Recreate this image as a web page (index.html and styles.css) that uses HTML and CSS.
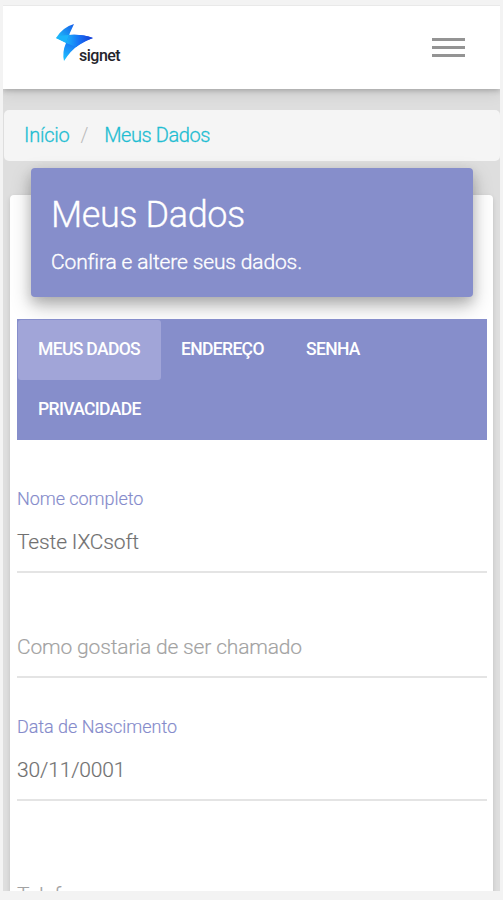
FILE: index.html
```html
<!DOCTYPE html>
<html lang="pt-BR">
<head>
<meta charset="utf-8">
<title>Meus Dados</title>
<link rel="stylesheet" href="styles.css">
</head>
<body>
<div class="screen">
  <header class="header">
    <div class="brand">
      <svg class="mark" width="42" height="38" viewBox="0 0 42 38">
        <defs>
          <linearGradient id="wing" x1="0" y1="0" x2="1" y2="0"><stop offset="0" stop-color="#1cb4fb"/><stop offset=".5" stop-color="#1670f5"/><stop offset="1" stop-color="#1838ce"/></linearGradient>
          <linearGradient id="tail" x1="0" y1="1" x2=".5" y2="0"><stop offset="0" stop-color="#20c8ff"/><stop offset="1" stop-color="#124df0"/></linearGradient>
          <linearGradient id="tip" x1="0" y1="1" x2="1" y2="0"><stop offset="0" stop-color="#22d3fd"/><stop offset="1" stop-color="#155be9"/></linearGradient>
        </defs>
        <path d="M19 0Q8 3 1 14L12 19Q14 9 19 0Z" fill="url(#tip)"/>
        <path d="M11 19L14 11Q27 10 38 14Q30 17 24 21Q16 26 9 37Q7 28 11 19Z" fill="url(#tail)"/>
        <path d="M11 19L14 11Q27 10 38 14Q28 17 21 23Z" fill="url(#wing)"/>
        <path d="M1 14L11 19L14 11Q6 11 1 14Z" fill="#1cb4fa"/>
      </svg>
      <span class="wordmark">signet</span>
    </div>
    <div class="menu"><i></i><i></i><i></i></div>
  </header>
  <nav class="crumbs"><a class="home">Início</a><span class="slash">/</span><a class="current">Meus Dados</a></nav>
  <main class="card">
    <section class="banner">
      <h1>Meus Dados</h1>
      <p>Confira e altere seus dados.</p>
    </section>
    <ul class="tabs">
      <li class="active"><span>MEUS DADOS</span></li>
      <li class="address"><span>ENDEREÇO</span></li>
      <li class="password"><span>SENHA</span></li>
      <li class="privacy"><span>PRIVACIDADE</span></li>
    </ul>
    <form class="form">
      <div class="field name"><label>Nome completo</label><div class="value">Teste IXCsoft</div></div>
      <div class="field nick"><div class="value empty">Como gostaria de ser chamado</div></div>
      <div class="field birth"><label>Data de Nascimento</label><div class="value">30/11/0001</div></div>
      <div class="field phone"><div class="value empty">Telefone</div></div>
    </form>
  </main>
</div>
</body>
</html>
```
FILE: styles.css
```css
* { box-sizing: border-box; }
body { margin: 0; height: 900px; overflow: hidden; padding: 5px 3px 9px 3px; background: #f3f3f3; font-family: Roboto, sans-serif; font-weight: 300; }
.screen { height: 886px; width: 497px; overflow: hidden; background: #dedede; }
.header { position: relative; height: 84px; background: #fff; border-top: 1px solid #e9e9e9; display: flex; justify-content: space-between; padding: 18px 35px 0 52px; box-shadow: 0 2px 5px rgba(0,0,0,.2), 0 5px 14px rgba(0,0,0,.08); }
.brand { display: flex; }
.mark { display: block; flex: none; }
.wordmark { font: 500 16px/20px Roboto, sans-serif; letter-spacing: -.5px; color: #24242b; margin: 22px 0 0 -18px; }
.menu { width: 33px; display: flex; flex-direction: column; gap: 5px; padding-top: 14px; }
.menu i { height: 3px; background: #949494; }
.crumbs { margin: 21px 0 0 1px; height: 51px; border-radius: 5px; background: #f5f5f5; padding-left: 20px; display: flex; font-size: 20px; line-height: 50px; color: #1ebdd2; white-space: nowrap; letter-spacing: -.4px; }
.crumbs a { font-weight: 300; -webkit-text-stroke: .3px; }
.home { letter-spacing: -.2px; }
.slash { color: #bbb; margin: 0 16px 0 11px; }
.card { margin: 34px 7px 0; height: 720px; padding: 0 7px; background: #fff; border-radius: 4px; box-shadow: 0 2px 5px rgba(0,0,0,.13); }
.banner { position: relative; top: -27px; margin: 0 13px -27px 14px; width: 442px; height: 129px; border-radius: 4px; background: #868ecb; color: #fff; padding: 26px 20px 0; box-shadow: 0 9px 20px rgba(0,0,0,.25), 0 5px 12px rgba(0,0,0,.14); }
h1 { margin: 0; font-size: 36px; line-height: 42px; font-weight: 300; white-space: nowrap; letter-spacing: -.4px; -webkit-text-stroke: .3px; }
.banner p { margin: 14px 0 0; font-size: 21px; line-height: 24px; font-weight: 300; white-space: nowrap; letter-spacing: -.14px; -webkit-text-stroke: .35px; }
.tabs { position: relative; list-style: none; margin: 22px 0 0; padding: 1px 0 0 1px; height: 121px; width: 470px; background: #868ecb; display: flex; flex-wrap: wrap; align-content: flex-start; color: #fff; font-size: 17.500px; line-height: 58px; font-weight: 500; letter-spacing: -.65px; }
.tabs li { height: 60px; padding: 0 20px; white-space: nowrap; }
.tabs .active { width: 143px; background: #a1a5d8; border-radius: 3px; }
.tabs .address { width: 125px; }
.tabs .password { width: 95px; }
.tabs .privacy { width: 143px; line-height: 59px; }
.form { margin: 0; width: 470px; }
.field { border-bottom: 2px solid #e4e4e4; white-space: nowrap; }
label { display: block; font-size: 18px; line-height: 22px; color: #858bcb; -webkit-text-stroke: .15px; letter-spacing: -.04px; }
.value { font-size: 21px; line-height: 26px; color: #707070; -webkit-text-stroke: .15px; letter-spacing: -.16px; }
.empty { color: #a2a2a2; }
.name { height: 85px; margin-top: 48px; }
.name .value { margin-top: 19px; }
.nick { height: 105px; padding-top: 61px; }
.birth { height: 123px; padding-top: 38px; }
.birth .value { margin-top: 19px; }
.phone { height: 120px; padding-top: 81px; border: 0; }
```
